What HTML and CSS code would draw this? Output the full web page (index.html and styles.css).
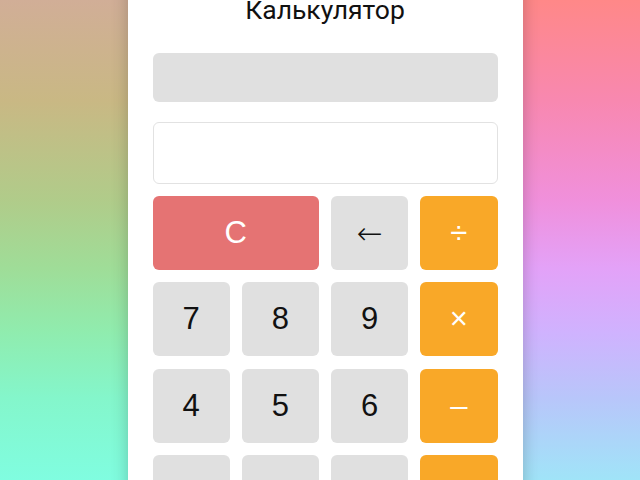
FILE: index.html
```html
<!DOCTYPE html>
<html lang="ru">
<head>
<meta charset="utf-8">
<title>Калькулятор</title>
<link rel="stylesheet" href="styles.css">
</head>
<body>
<div class="page">
  <div class="card">
    <h1 class="title">Калькулятор</h1>
    <div class="display"></div>
    <input class="entry" type="text">
    <div class="keys">
      <button class="key key-clear">C</button>
      <button class="key key-back">&larr;</button>
      <button class="key key-op">÷</button>
      <button class="key">7</button>
      <button class="key">8</button>
      <button class="key">9</button>
      <button class="key key-op">×</button>
      <button class="key">4</button>
      <button class="key">5</button>
      <button class="key">6</button>
      <button class="key key-op">–</button>
      <button class="key">1</button>
      <button class="key">2</button>
      <button class="key">3</button>
      <button class="key key-op">+</button>
      <button class="key">0</button>
      <button class="key">.</button>
      <button class="key">±</button>
      <button class="key key-op">=</button>
    </div>
  </div>
</div>
</body>
</html>
```

FILE: styles.css
```css
html, body {
  margin: 0;
  height: 100%;
  overflow: hidden;
}
body {
  font-family: "Liberation Sans", Arial, sans-serif;
  background-color: #c0c0c0;
  background-image:
    linear-gradient(to bottom, #d1ae97 0%, #c9b884 21%, #b0cc8a 42%, #9fdd98 56%, #90ecae 69%, #84f6cb 83%, #80fde0 100%),
    linear-gradient(to bottom, #ff8888 0%, #f888b0 21%, #f090dc 42%, #e3a2f8 56%, #d0b2fe 69%, #b8c6fa 83%, #a0e4f8 100%);
  background-size: 50% 100%, 50% 100%;
  background-position: left top, right top;
  background-repeat: no-repeat;
}
.page {
  display: flex;
  justify-content: center;
  padding-left: 10px;
}
.card {
  width: 345px;
  padding: 25px;
  margin-top: -28px;
  background: #ffffff;
  box-shadow: 0 0 16px rgba(0, 0, 0, 0.22);
}
.title {
  margin: -1px 0 29px;
  font-family: Roboto, "Liberation Sans", sans-serif;
  font-weight: 400;
  font-size: 26.5px;
  line-height: 28px;
  text-align: center;
  color: #111111;
}
.display {
  height: 49px;
  border-radius: 6px;
  background: #e0e0e0;
}
.entry {
  display: block;
  box-sizing: border-box;
  width: 100%;
  height: 62px;
  margin: 20px 0 12px;
  border: 1px solid #e2e2e2;
  border-radius: 6px;
  background: #ffffff;
  outline: none;
}
.keys {
  display: grid;
  grid-template-columns: repeat(4, 1fr);
  grid-auto-rows: 74px;
  gap: 12.4px 12px;
}
.key {
  border: none;
  border-radius: 6px;
  background: #e0e0e0;
  color: #111111;
  font-family: "Liberation Sans", Arial, sans-serif;
  font-size: 31px;
  padding: 0;
}
.key-back {
  font-family: "DejaVu Sans", sans-serif;
  font-weight: 200;
}
.key-clear {
  grid-column: span 2;
  background: #e57373;
  color: #ffffff;
}
.key-op {
  background: #f9a828;
  color: #ffffff;
}
```
